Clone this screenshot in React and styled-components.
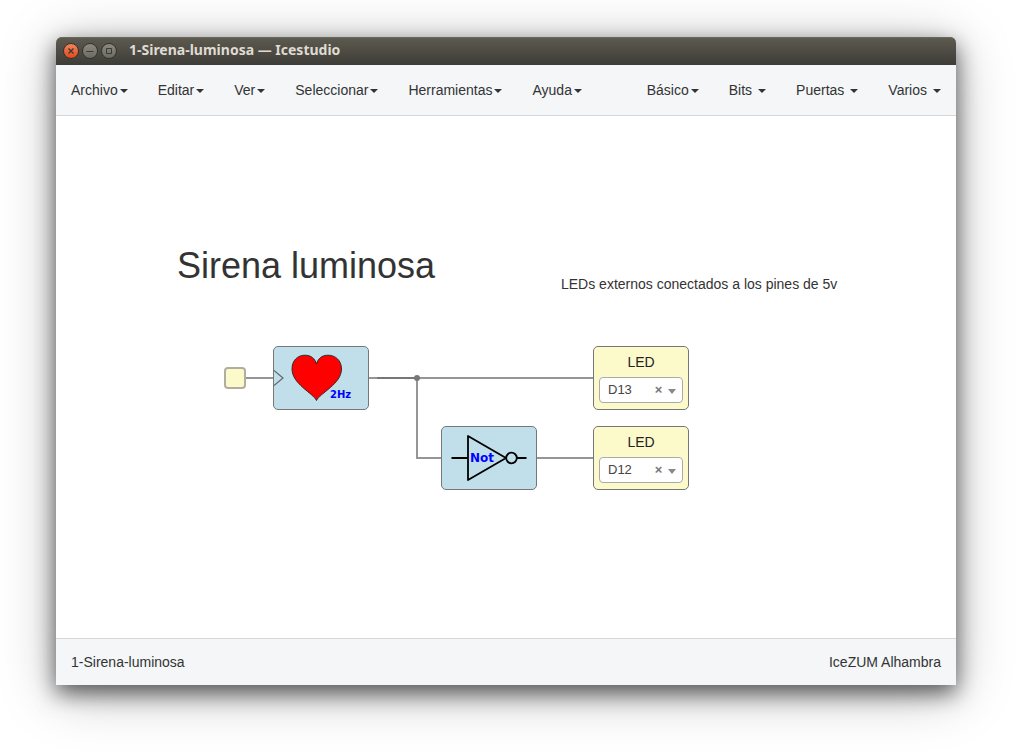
import React, { useState } from 'react';
import styled, { createGlobalStyle } from 'styled-components';

const GlobalStyle = createGlobalStyle`
  *, *::before, *::after { box-sizing: border-box; }
  body {
    margin: 0;
    background: #fff;
    color: #333;
    font: 14px/20px "Liberation Sans", Arial, sans-serif;
  }
`;

const Desktop = styled.div`
  display: flex;
  min-height: 100vh;
  padding: 37px 69px 68px 56px;
`;

const Window = styled.div`
  flex: 1;
  display: flex;
  flex-direction: column;
  min-width: 0;
  border-radius: 6px 6px 0 0;
  box-shadow: 0 8px 22px rgba(0, 0, 0, 0.6), 0 8px 56px rgba(0, 0, 0, 0.28);
`;

const TitleBar = styled.header`
  display: flex;
  align-items: center;
  gap: 3px;
  height: 28px;
  padding: 0 7px;
  border-radius: 6px 6px 0 0;
  background: linear-gradient(#5e5b50, #3d3c37);
  box-shadow: inset 0 1px #6a675c;
`;

const WindowButton = styled.button`
  width: 16px;
  height: 16px;
  padding: 0;
  border: 1px solid #34332e;
  border-radius: 50%;
  background: ${(p) =>
    p.$close ? 'linear-gradient(#f5845c, #dd4a1c)' : 'linear-gradient(#8b8980, #6c6a62)'};

  svg {
    display: block;
    width: 14px;
    height: 14px;
    fill: none;
    stroke: #3a3934;
  }
`;

const WindowTitle = styled.div`
  padding-left: 9px;
  color: #dfdbd2;
  font: bold 14px/20px "Noto Sans", sans-serif;
  white-space: nowrap;
  padding-bottom: 2px;
`;

const MenuBar = styled.nav`
  display: flex;
  justify-content: space-between;
  background: #f4f6f8;
  border-bottom: 1px solid #d5d8da;
`;

const MenuGroup = styled.div`
  display: flex;
`;

const MenuButton = styled.button`
  display: flex;
  align-items: center;
  gap: ${(p) => (p.$spaced ? 6 : 2)}px;
  padding: 15px;
  border: 0;
  background: none;
  color: #333;
  font: inherit;
  white-space: nowrap;

  &::after {
    content: "";
    margin-top: 2px;
    border: 4px solid transparent;
    border-top-color: currentColor;
    border-bottom: 0;
  }
`;

const Canvas = styled.main`
  position: relative;
  flex: 1;
  min-height: 400px;
  overflow: hidden;
  background: #fff;
`;

const Placed = styled.div`
  position: absolute;
  left: ${(p) => p.$x}px;
  top: ${(p) => p.$y}px;
`;

const Heading = styled.h1`
  margin: 0;
  font-size: 36px;
  font-weight: normal;
  line-height: 40px;
  white-space: nowrap;
`;

const Note = styled.p`
  margin: 0;
  white-space: nowrap;
`;

const Wires = styled.svg`
  position: absolute;
  inset: 0;
  width: 100%;
  height: 100%;
  fill: none;
  stroke: #969696;
  stroke-width: 2;
`;

const InputPort = styled.div`
  width: 22px;
  height: 22px;
  border: 2px solid #afae9f;
  border-radius: 4px;
  background: #fcfacb;
`;

const Block = styled.div`
  width: 96px;
  height: 64px;
  border: 1px solid #777;
  border-radius: 5px;
  background: #c0dfeb;

  svg {
    display: block;
    width: 94px;
    height: 62px;
  }

  text {
    fill: #00f;
    font-family: "DejaVu Sans", sans-serif;
    font-weight: bold;
  }
`;

const LedBlock = styled(Block)`
  display: flex;
  flex-direction: column;
  justify-content: space-between;
  padding: 5px 5px 6px;
  background: #fcfacb;
`;

const LedLabel = styled.label`
  color: #222;
  line-height: 20px;
  text-align: center;
`;

const PinField = styled.div`
  display: flex;
  align-items: center;
  position: relative;
`;

const PinSelect = styled.select`
  appearance: none;
  width: 100%;
  height: 26px;
  padding: 0 30px 0 8px;
  border: 1px solid #aaa;
  border-radius: 4px;
  background: #fff;
  color: #444;
  font: 13px/24px "Liberation Sans", Arial, sans-serif;
`;

const ClearButton = styled.button`
  position: absolute;
  right: 20px;
  width: 9px;
  height: 20px;
  padding: 0;
  border: 0;
  background: none;
  color: #777;
  font: bold 13px/20px "Liberation Sans", Arial, sans-serif;
`;

const PinArrow = styled.span`
  position: absolute;
  right: 7px;
  top: 12px;
  border: 4px solid transparent;
  border-top: 5px solid #888;
  border-bottom: 0;
  pointer-events: none;
`;

const StatusBar = styled.footer`
  display: flex;
  justify-content: space-between;
  padding: 13px 15px;
  border-top: 1px solid #d5d8da;
  background: #f4f6f8;
`;

const mainMenus = ['Archivo', 'Editar', 'Ver', 'Seleccionar', 'Herramientas', 'Ayuda'];
const blockMenus = [
  { name: 'Básico' },
  { name: 'Bits', spaced: true },
  { name: 'Puertas', spaced: true },
  { name: 'Varios', spaced: true },
];

function Led({ id, initial }) {
  const [pin, setPin] = useState(initial);
  return (
    <LedBlock>
      <LedLabel htmlFor={id}>LED</LedLabel>
      <PinField>
        <PinSelect id={id} value={pin} onChange={(e) => setPin(e.target.value)}>
          <option value="" />
          <option>D12</option>
          <option>D13</option>
        </PinSelect>
        <ClearButton type="button" aria-label="Quitar pin" onClick={() => setPin('')}>
          ×
        </ClearButton>
        <PinArrow />
      </PinField>
    </LedBlock>
  );
}

export default function App() {
  return (
    <Desktop>
      <GlobalStyle />
      <Window>
        <TitleBar>
          <WindowButton $close type="button" aria-label="Cerrar">
            <svg viewBox="0 0 14 14"><path d="M4.500 4.500l5 5M9.500 4.500l-5 5" strokeWidth="1.4" /></svg>
          </WindowButton>
          <WindowButton type="button" aria-label="Minimizar">
            <svg viewBox="0 0 14 14"><path d="M3.500 7.500h7" /></svg>
          </WindowButton>
          <WindowButton type="button" aria-label="Maximizar">
            <svg viewBox="0 0 14 14"><path d="M4.500 4.500h5v5h-5z" /></svg>
          </WindowButton>
          <WindowTitle>1-Sirena-luminosa — Icestudio</WindowTitle>
        </TitleBar>

        <MenuBar>
          <MenuGroup>
            {mainMenus.map((name) => (
              <MenuButton key={name} type="button">{name}</MenuButton>
            ))}
          </MenuGroup>
          <MenuGroup>
            {blockMenus.map(({ name, spaced }) => (
              <MenuButton key={name} type="button" $spaced={spaced}>{name}</MenuButton>
            ))}
          </MenuGroup>
        </MenuBar>

        <Canvas>
          <Wires>
            <path d="M190 262H217M313 262H537M361 262V342H385M481 342H537" />
            <path d="M321 262H361" stroke="#777" />
            <circle cx="361" cy="262" r="3" fill="#777" stroke="none" />
          </Wires>

          <Placed $x={121} $y={130}><Heading>Sirena luminosa</Heading></Placed>
          <Placed $x={505} $y={158}><Note>LEDs externos conectados a los pines de 5v</Note></Placed>

          <Placed $x={168} $y={251}><InputPort /></Placed>

          <Placed $x={217} $y={230}>
            <Block>
              <svg viewBox="1 1 94 62">
                <path d="M1 24.5L10 32L1 39.5" fill="none" stroke="#666" strokeWidth="1.2" />
                <path
                  d="M43.5 54.5C40 47 19 38 19 23C19 14.500 24.500 9.200 32 9.200C38 9.200 42 12.500 43.500 18C45 12.500 49 9.200 55 9.200C62.500 9.200 68.500 14.500 68.500 23C68.500 38 47 47 43.500 54.500Z"
                  fill="#f00"
                  stroke="#222"
                  strokeWidth="0.9"
                />
                <text x="57" y="52" fontSize="10">2Hz</text>
              </svg>
            </Block>
          </Placed>

          <Placed $x={385} $y={310}>
            <Block>
              <svg viewBox="1 1 94 62">
                <g fill="none" stroke="#000" strokeWidth="1.8">
                  <path d="M27 10V54L65 32Z" strokeLinejoin="round" />
                  <path d="M10.500 32H27M76 32H85.500" />
                  <circle cx="70.500" cy="32" r="5.300" />
                </g>
                <text x="29" y="36" fontSize="12">Not</text>
              </svg>
            </Block>
          </Placed>

          <Placed $x={537} $y={230}><Led id="led-upper" initial="D13" /></Placed>
          <Placed $x={537} $y={310}><Led id="led-lower" initial="D12" /></Placed>
        </Canvas>

        <StatusBar>
          <span>1-Sirena-luminosa</span>
          <span>IceZUM Alhambra</span>
        </StatusBar>
      </Window>
    </Desktop>
  );
}
